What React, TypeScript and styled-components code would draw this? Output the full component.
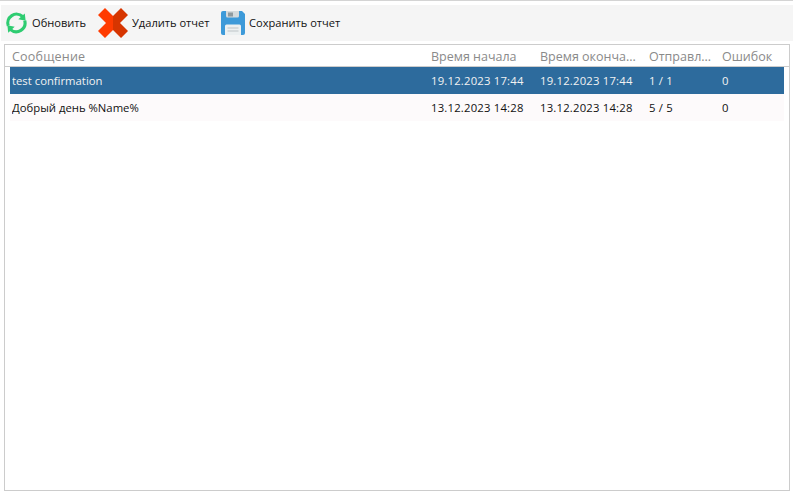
import styled, { createGlobalStyle } from 'styled-components'

const GlobalStyle = createGlobalStyle`
  html, body {
    margin: 0;
    padding: 0;
    background: #ffffff;
  }
  body {
    font-family: "Open Sans", "Noto Sans", "Liberation Sans", sans-serif;
  }
`

const Page = styled.div`
  width: 793px;
  height: 495px;
  box-sizing: border-box;
  border-top: 1px solid #d4d4d4;
  padding: 4px 0 4px 1px;
  display: flex;
  flex-direction: column;
  overflow: hidden;
`

const Toolbar = styled.div`
  height: 36px;
  flex: none;
  background: #f5f5f5;
  display: flex;
  align-items: center;
  padding-left: 4px;
  margin-bottom: 3px;
`

const ToolButton = styled.div<{ $gap: number; $width: number }>`
  display: flex;
  align-items: center;
  gap: ${p => p.$gap}px;
  width: ${p => p.$width}px;
  flex: none;
  font-size: 11.1px;
  color: #111111;
  white-space: nowrap;
`

const ToolLabel = styled.span`
  padding-bottom: 1px;
`

const Panel = styled.div`
  flex: 1;
  margin: 0 3px;
  box-sizing: border-box;
  border: 1px solid #cccccc;
  display: flex;
  flex-direction: column;
`

const HeaderRow = styled.div`
  height: 22px;
  flex: none;
  box-sizing: border-box;
  border-bottom: 1px solid #cccccc;
  padding: 2px 0 0 7px;
  display: grid;
  grid-template-columns: 419px 109px 109px 73px 1fr;
  align-items: center;
  font-size: 12.5px;
  color: #8a8a8a;
`

const Rows = styled.div`
  padding: 0 5px;
`

const Row = styled.div<{ $selected?: boolean }>`
  height: 27px;
  display: grid;
  grid-template-columns: 419px 109px 109px 73px 1fr;
  align-items: center;
  padding-left: 2px;
  font-size: 11.3px;
  background: ${p => (p.$selected ? '#2d6b9d' : '#fdfafb')};
  color: ${p => (p.$selected ? '#f2f2f2' : '#111111')};
`

const Cell = styled.span<{ $spacing?: number }>`
  letter-spacing: ${p => p.$spacing ?? 0}px;
  white-space: nowrap;
  overflow: hidden;
`

const RefreshIcon = () => (
  <svg width="23" height="22" viewBox="0 0 24 24">
    <path
      d="M3 15 A9.6 9.6 0 0 1 18.5 4.8"
      fill="none"
      stroke="#2ecc71"
      strokeWidth="3.4"
    />
    <path d="M21 1.5 L22 9.5 L14 8 Z" fill="#2ecc71" />
    <path
      d="M21 9.5 A9.6 9.6 0 0 1 5.5 19.2"
      fill="none"
      stroke="#2ecc71"
      strokeWidth="3.4"
    />
    <path d="M3 22.5 L2 14.5 L10 16 Z" fill="#2ecc71" />
  </svg>
)

const DeleteIcon = () => (
  <svg width="30" height="30" viewBox="0 0 30 30">
    <path
      d="M7 0 L15 8 L15 22 L7 30 L0 23 L8 15 L0 7 Z"
      fill="#ff3b00"
    />
    <path
      d="M23 0 L30 7 L22 15 L30 23 L23 30 L15 22 L15 8 Z"
      fill="#d63500"
    />
  </svg>
)

const SaveIcon = () => (
  <svg width="24" height="24" viewBox="0 0 24 24">
    <path
      d="M2 0 H21 L24 3 V22 A2 2 0 0 1 22 24 H2 A2 2 0 0 1 0 22 V2 A2 2 0 0 1 2 0 Z"
      fill="#3d9ad9"
    />
    <path
      d="M5 0 H18 V5 A1.5 1.5 0 0 1 16.5 6.5 H6.5 A1.5 1.5 0 0 1 5 5 Z"
      fill="#d5dadc"
    />
    <rect x="7" y="1.5" width="5" height="4" fill="#8f9a9f" />
    <path
      d="M5.5 13.5 H18.5 A1.5 1.5 0 0 1 20 15 V24 H4 V15 A1.5 1.5 0 0 1 5.5 13.5 Z"
      fill="#ecf0f1"
    />
    <rect x="6.5" y="16.5" width="11" height="1" fill="#bdc3c7" />
    <rect x="6.5" y="19.5" width="11" height="1" fill="#bdc3c7" />
  </svg>
)

const reports = [
  {
    message: 'test confirmation',
    start: '19.12.2023 17:44',
    end: '19.12.2023 17:44',
    sent: '1 / 1',
    errors: '0',
    selected: true,
  },
  {
    message: 'Добрый день %Name%',
    start: '13.12.2023 14:28',
    end: '13.12.2023 14:28',
    sent: '5 / 5',
    errors: '0',
    selected: false,
  },
]

const App = () => {
  return (
    <Page>
      <GlobalStyle />
      <Toolbar>
        <ToolButton $gap={4} $width={93}>
          <RefreshIcon />
          <ToolLabel>Обновить</ToolLabel>
        </ToolButton>
        <ToolButton $gap={4} $width={123}>
          <DeleteIcon />
          <ToolLabel>Удалить отчет</ToolLabel>
        </ToolButton>
        <ToolButton $gap={4} $width={130}>
          <SaveIcon />
          <ToolLabel>Сохранить отчет</ToolLabel>
        </ToolButton>
      </Toolbar>
      <Panel>
        <HeaderRow>
          <Cell $spacing={0.2}>Сообщение</Cell>
          <Cell>Время начала</Cell>
          <Cell>Время оконча...</Cell>
          <Cell>Отправл...</Cell>
          <Cell>Ошибок</Cell>
        </HeaderRow>
        <Rows>
          {reports.map(r => (
            <Row key={r.message} $selected={r.selected}>
              <Cell>{r.message}</Cell>
              <Cell $spacing={0.2}>{r.start}</Cell>
              <Cell $spacing={0.2}>{r.end}</Cell>
              <Cell $spacing={0.2}>{r.sent}</Cell>
              <Cell>{r.errors}</Cell>
            </Row>
          ))}
        </Rows>
      </Panel>
    </Page>
  )
}

export default App
